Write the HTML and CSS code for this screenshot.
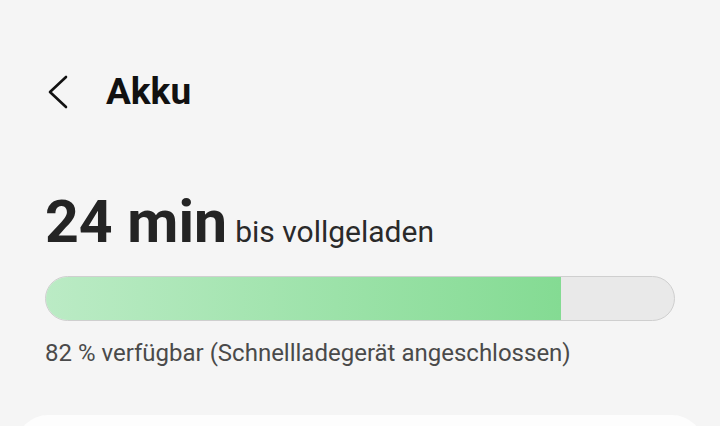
FILE: index.html
```html
<!DOCTYPE html>
<html lang="de">
<head>
    <meta charset="UTF-8">
    <meta name="viewport" content="width=device-width, initial-scale=1.0">
    <title>Akku</title>
    <link rel="stylesheet" href="styles.css">
</head>
<body>

    <div class="header">
        <svg class="backIcon" width="24" height="34" viewBox="0 0 24 34">
            <path d="M20 2 L4 17 L20 32" fill="none" stroke="#111" stroke-width="2.6" stroke-linecap="round" stroke-linejoin="round"/>
        </svg>
        <h1 class="title">Akku</h1>
    </div>

    <div class="summary">
        <div class="timeRow">
            <span class="timeValue">24 min</span>
            <span class="timeLabel">bis vollgeladen</span>
        </div>

        <div class="chargeBar">
            <div class="chargeFill" style="width: 82%"></div>
        </div>

        <div class="chargeInfo">82 % verfügbar (Schnellladegerät angeschlossen)</div>
    </div>

    <div class="card"></div>

</body>
</html>
```

FILE: styles.css
```css
body {
    margin: 0;
    background-color: #f5f5f5;
    font-family: Roboto, "Noto Sans", sans-serif;
    color: #222;
    overflow: hidden;
}

.header {
    display: flex;
    align-items: center;
    height: 48px;
    margin-top: 68px;
    padding-left: 46px;
}

.backIcon {
    display: block;
    margin-right: 36px;
}

.title {
    margin: 0;
    font-size: 37px;
    font-weight: 700;
    color: #111;
    line-height: 48px;
}

.summary {
    padding: 0 45px;
}

.timeRow {
    display: flex;
    align-items: baseline;
    margin-top: 76px;
    line-height: 60px;
}

.timeValue {
    font-size: 59px;
    font-weight: 700;
    color: #242424;
    margin-right: 8px;
}

.timeLabel {
    font-size: 30px;
    color: #2a2a2a;
}

.chargeBar {
    height: 43px;
    margin-top: 14px;
    background-color: #e9e9e9;
    border: 1px solid #cfcfcf;
    border-radius: 23px;
    overflow: hidden;
}

.chargeFill {
    height: 100%;
    background: linear-gradient(to right, #bbebc5, #84db93);
}

.chargeInfo {
    margin-top: 18px;
    font-size: 24px;
    line-height: 28px;
    color: #4a4a4a;
}

/* next settings card, cut off at the bottom */
.card {
    height: 200px;
    margin: 48px 16px 0;
    background-color: #fdfdfd;
    border-radius: 32px;
}
```
